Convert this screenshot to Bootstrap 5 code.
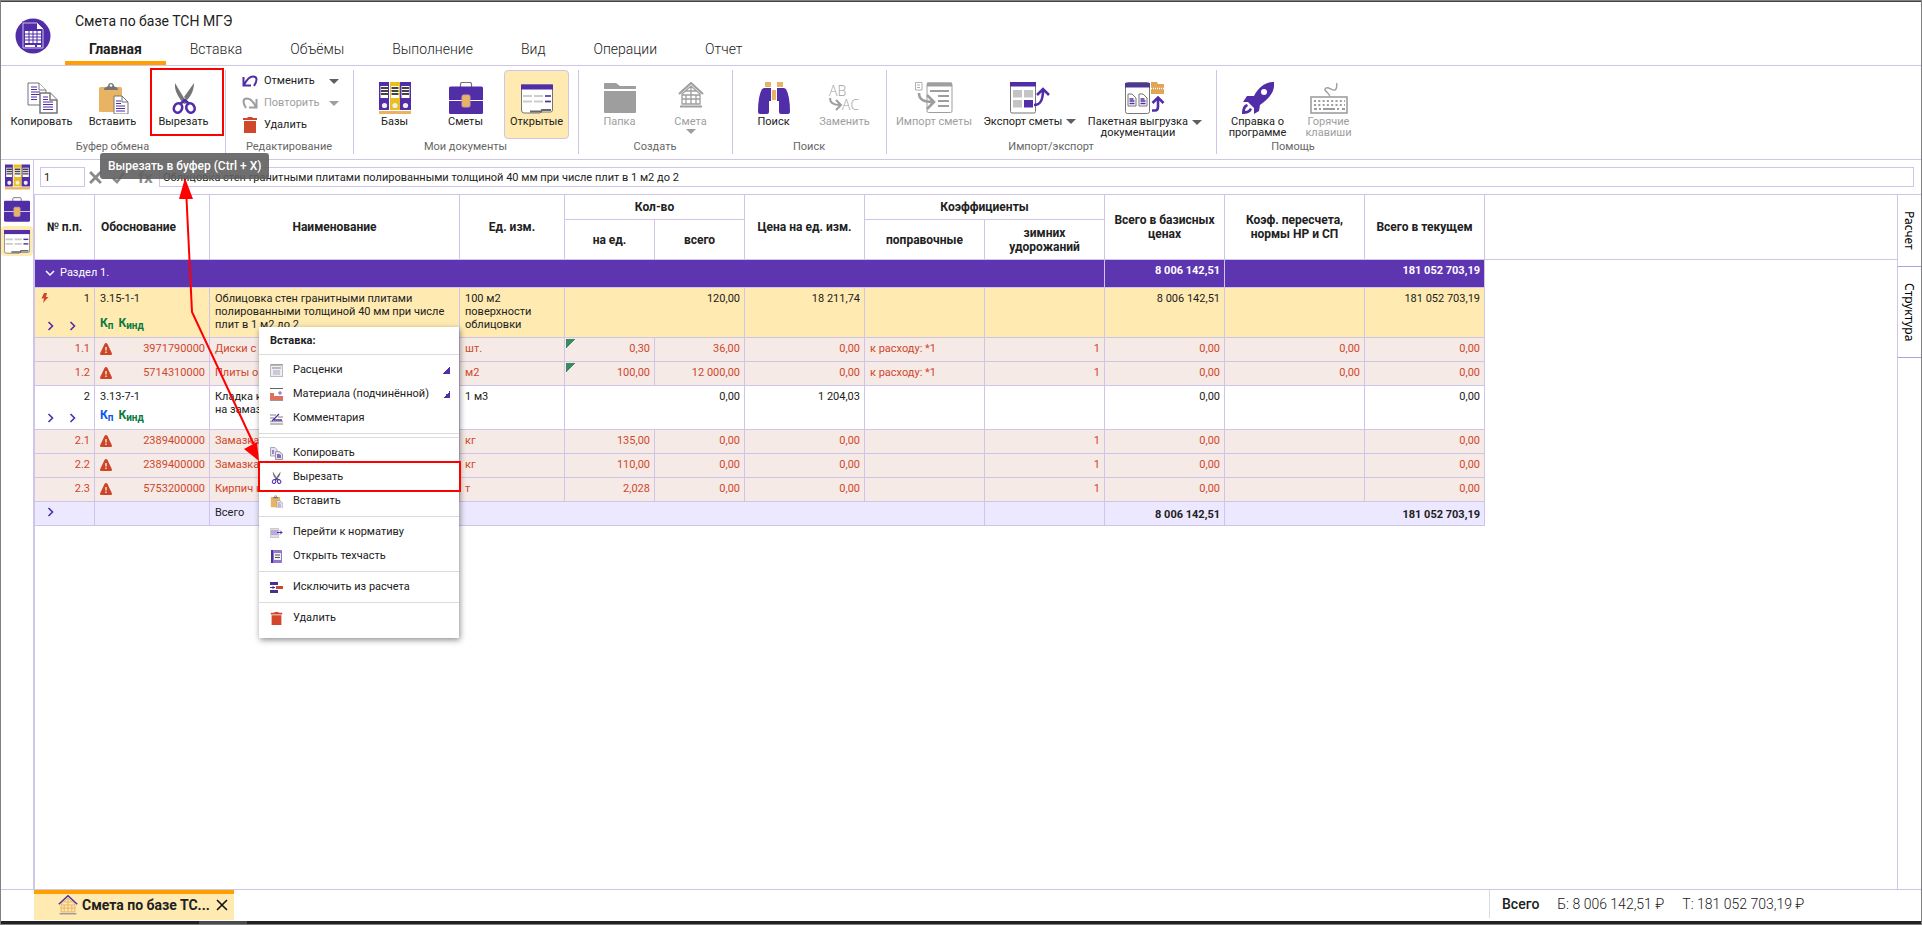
<!DOCTYPE html>
<html lang="ru">
<head>
<meta charset="utf-8">
<meta name="viewport" content="width=device-width, initial-scale=1">
<title>Смета по базе ТСН МГЭ</title>
<link href="https://cdn.jsdelivr.net/npm/bootstrap@5.3.0/dist/css/bootstrap.min.css" rel="stylesheet">
<style>
:root{--line:#cfc5e8;--violet:#512da8;--amber:#ffebb2;--orange:#ffa000;--danger:#d0472c}
body{font-family:Roboto,"Liberation Sans",sans-serif;font-size:12px;line-height:14px;color:#212121;background:#fff}
button{font:inherit;color:inherit;background:none;border:0;padding:0}
svg{display:block;flex:none}
.app{border:1px solid #808080;min-height:100vh;position:relative}
.app-header{border-top:1px solid #444;border-bottom:1px solid var(--line)}
.logo{margin:16px 14px 0 14px}
.doc-title{font-size:14px;line-height:20px;padding:9px 0 0 10px;color:#212121}
.tabs .nav-link{font-size:14px;line-height:20px;font-weight:300;color:#212121;padding:8px 24px 2px;border-bottom:4px solid transparent}
.tabs .nav-link.active{font-weight:700;border-color:var(--orange)}
.ribbon{border-bottom:1px solid var(--line);padding:4px 0 5px;font-size:11px}
.group{border-right:1px solid var(--line);padding:0 9px 0 8px}
.group:last-child{border:0}
.group-title{color:#666;text-align:center;line-height:16px;height:15px}
.tool{min-width:65px;height:69px;border:1px solid transparent;border-radius:4px;padding-top:11px;line-height:11px;display:flex;flex-direction:column;align-items:center;gap:2px;white-space:nowrap}
.tool.on{background:var(--amber);border-color:var(--line)}
.tool:disabled,.row-tool:disabled{color:#9e9e9e}
.caret{width:0;height:0;border:5px solid transparent;border-top-color:#5f5f5f;border-bottom:0;display:block}
:disabled .caret{border-top-color:#9e9e9e}
.row-tool{height:22px;display:flex;align-items:center;gap:6px;width:100%}
.row-tool span:nth-of-type(1){width:59px;text-align:left}
.frame{position:absolute;border:2px solid red;pointer-events:none}
.cut-frame{inset:-2px -8px 3px -1px}
.tip{position:absolute;left:-51px;top:83px;z-index:3;background:rgba(95,95,95,.9);color:#fff;font-size:12px;font-weight:500;line-height:16px;padding:5px 8px;border-radius:3px;white-space:nowrap}
.rail{width:32px;padding-top:2px;gap:2px}
.rail button{width:32px;height:30px;border-radius:4px;display:flex;align-items:center;justify-content:center}
.rail .on{background:var(--amber)}
.main-col{border-left:1px solid var(--line)}
.formula{padding:7px 7px 7px 6px;height:34px;color:#8a8a8a}
.formula input{height:20px;border:1px solid var(--line);padding:0 3px;font-size:11px;color:#212121;border-radius:0}
.cell-no{width:45px}
.fx{font-size:17px;font-weight:700;width:21px}
.work{border-top:1px solid var(--line)}
.sheet-area{border-left:1px solid var(--line);overflow:hidden}
.filler{height:65px;border-bottom:1px solid var(--line)}
.sheet{table-layout:fixed;width:1450px;border-collapse:separate;border-spacing:0;font-size:11px;line-height:13px;flex:none}
.sheet th,.sheet td{border-right:1px solid var(--line);border-bottom:1px solid var(--line)}
.sheet th{font-size:12px;line-height:14px;font-weight:700;text-align:center;vertical-align:middle;padding:0 8px}
.sheet th.start{text-align:left;padding-left:6px}
.sheet td{padding:4px 4px 0 5px;vertical-align:top;overflow:hidden;white-space:nowrap}
.sheet .n{text-align:right}
.h25 th{height:25px}.h40 th{height:40px}
.sheet tr.section td{height:28px;background:#5e35b1;color:#fff}
.sheet tr.section td:first-child{padding-top:6px}
.section .n,.total .n{font-weight:700}
.sel td{height:50px;background:var(--amber)}
.plain td{height:44px}
.res td{height:24px;background-color:#f5eae6;color:var(--danger)}
.total td{height:24px;background:#ece8ff}
.sheet .total .n{padding-top:6px}
.sheet td.wrap{white-space:normal}
.pos{display:flex;justify-content:space-between}
.warn{margin-top:1px}
.sel .inner{height:39px}.plain .inner{height:33px}
.inner{display:flex;flex-direction:column;justify-content:space-between}
.chevs{display:flex;gap:14px;padding-left:7px}
.kf{font-size:12px;font-weight:700;line-height:16px;color:#0c7a40;display:flex;gap:5px}
.kf sub{font-size:10px;bottom:-2px}
.kf .b{color:#0b57f0}
.res .note{background-image:linear-gradient(135deg,#3b8a62 50%,transparent 50%);background-size:10px 10px;background-position:1px 1px;background-repeat:no-repeat}
.menu{position:absolute;left:224px;top:132px;width:200px;z-index:2;background:#fff;box-shadow:1px 2px 6px rgba(0,0,0,.45);padding-bottom:8px;font-size:11px}
.menu h6{font-size:11px;line-height:27px;margin:0;padding-left:11px;font-weight:700;color:#212121}
.menu hr{margin:3px 0;border:0;border-top:1px solid #dcdcdc;opacity:1}
.menu button{display:flex;align-items:center;gap:10px;width:100%;height:24px;padding:0 9px 0 11px;text-align:left}
.menu h6+hr{margin:0 0 3px}
.sub{margin-left:auto;width:7px;height:7px;background:linear-gradient(135deg,transparent 50%,var(--violet) 50%)}
.menu-frame{left:-1px;right:-2px;top:134px;height:31px}
.arrow{position:absolute;left:169px;top:177px;z-index:4;pointer-events:none}
.side{width:24px;border-left:1px solid var(--line)}
.side button{writing-mode:vertical-rl;width:23px;border-bottom:1px solid #b39ddb;font-family:"Noto Sans",sans-serif;font-size:12px;line-height:23px;padding:16px 0;text-align:left;color:#000}
.app-footer{border-top:1px solid var(--line);height:32px}
.doc-tab{width:200px;height:30px;margin-left:33px;background:var(--amber);border-top:4px solid var(--orange);font-size:14px;font-weight:700;padding:0 6px 4px 24px}
.totals{border-left:1px solid #dcdcdc;width:432px;font-size:14px;font-weight:300;height:28px;padding-left:12px;gap:18px}
.totals b{font-weight:500}
.taskbar{height:3px;background:linear-gradient(90deg,#222 198px,#4a4a4a 198px 246px,#222 246px)}
</style>
</head>
<body>
<svg width="0" height="0" class="position-absolute">
<symbol id="i-copy" viewBox="0 0 32 32"><g fill="#fff" stroke="#757575"><path d="M2 1h11l7 7v15H2z"/><path d="M13 1v7h7"/></g><path d="M5 5h6M5 7.500h6M5 10h9M5 12.500h9M5 15h6M5 17.500h6" stroke="#512da8" stroke-width="1"/><g fill="#fff" stroke="#757575" stroke-width="1.500"><path d="M14 11h10l7 7v13H14z"/><path d="M24 11v7h7"/></g><path d="M17 15h5M17 17.500h5M17 20h10M17 22.500h10M17 25h10M17 27.500h10" stroke="#512da8"/></symbol>
<symbol id="i-copy-s" viewBox="0 0 13 13"><path d="M.5.500H5L7 2.500V9H.5z" fill="#e6e0f2" stroke="#aaa"/><path d="M2 3h2v4H2z" fill="#9c86d2"/><path d="M5.500 4.500H9L12.500 7v5.500h-7z" fill="#e6e0f2" stroke="#999"/><path d="M7 7h2l2 1v3H7z" fill="#8468c8"/></symbol>
<symbol id="i-paste" viewBox="0 0 32 32"><rect x="2" y="5" width="23" height="25" rx="1.500" fill="#e9b364"/><path d="M7 8c0-3 3-3 4-4 0-4 6-4 6 0 1 1 4 1 4 4z" fill="#757575"/><circle cx="14" cy="3.500" r="1.300" fill="#fff"/><path d="M17 14h8l6 6v12H17z" fill="#fff" stroke="#757575"/><path d="M25 14v6h6" fill="none" stroke="#757575"/><path d="M19 19h5M19 21.500h5M19 24h9M19 26.500h9M19 29h9" stroke="#512da8"/></symbol>
<symbol id="i-cut" viewBox="0 0 32 32"><path d="M7 1l12 20-3 1C12 17 6 10 7 1zM26 1c0 7-3 13-7 17l-3-3z" fill="#757575"/><g fill="none" stroke="#512da8" stroke-width="2.600"><ellipse cx="10" cy="26" rx="4" ry="4.800" transform="rotate(25 10 26)"/><ellipse cx="22.500" cy="26" rx="4" ry="4.800" transform="rotate(-25 22.500 26)"/><path d="M12 22l5-4 4 4"/></g></symbol>
<symbol id="i-undo" viewBox="0 0 16 14"><path d="M1.500 3v8.500H9M2 11C5 5 8 2.500 11 2.500c5 0 4 5 1 9.500" fill="none" stroke="currentColor" stroke-width="2"/></symbol>
<symbol id="i-trash" viewBox="0 0 14 16"><path d="M1 4h12v12H1zM0 1h4l1-1h4l1 1h4v2H0z" fill="#d0472c"/></symbol>
<symbol id="i-books" viewBox="0 0 32 32"><path fill="#512da8" d="M0 0h10v28H0zM21 0h11v28H21z"/><path fill="#e8bf1f" d="M11 0h10v28H11z"/><path fill="#fff" d="M1.500 4h7.500v12H1.500zM12 4h8v12h-8zM22.500 4h8v12h-8z"/><path stroke="#444" stroke-width="1.800" d="M2 6h7M2 9h7M2 12h7M12.500 6h7M12.500 9h7M12.500 12h7M23 6h7M23 9h7M23 12h7"/><g fill="#eee"><circle cx="5.500" cy="23.500" r="2.600"/><circle cx="16" cy="23.500" r="2.600"/><circle cx="26.500" cy="23.500" r="2.600"/></g><path fill="#e9b364" d="M0 29h32v3H0z"/></symbol>
<symbol id="i-case" viewBox="0 0 34 32"><path d="M11.500 5V2q0-1.500 1.500-1.500h8q1.500 0 1.500 1.500v3" fill="none" stroke="#757575" stroke-width="1.200"/><path d="M0 6q0-1.500 1.500-1.500h31Q34 4.500 34 6v12H0zM0 19h34v11.500q0 1.500-1.500 1.500h-31Q0 32 0 30.500z" fill="#512da8"/><rect x="13" y="13" width="8" height="12" rx="1.500" fill="#e9b364" stroke="#c8a0a0"/></symbol>
<symbol id="i-open" viewBox="0 0 32 32"><path d="M.5 3h31v25q0 2-2 2H20l-1 1H3q-2.500 0-2.500-3z" fill="#fff" stroke="#757575"/><path fill="#512da8" d="M0 2.500h32v5H0z"/><path d="M2 14h27M2 19.500h27" stroke="#ccc" stroke-width="2" stroke-dasharray="9 2"/><path d="M24 14h6M24 19.500h6" stroke="#512da8" stroke-width="1.600"/><path d="M9 29.500h11l1-1.500h9" stroke="#666" stroke-width="2" fill="none"/></symbol>
<symbol id="i-folder" viewBox="0 0 32 32"><path d="M0 7V2q0-1 1-1h11l4 3h15q1 0 1 1v2zM0 9h32v21q0 1-1 1H1q-1 0-1-1z" fill="#9e9e9e"/></symbol>
<symbol id="i-home" viewBox="0 1 32 32"><path d="M4 13L16 2l12 11" fill="none" stroke="var(--roof,#9e9e9e)" stroke-width="2"/><path d="M7 13l9-8 9 8v10H7zM7 14h18M11 14v9M16 14v9M21 14v9M11 10h10M7 18h18M16 5v9" fill="none" stroke="var(--wall,#9e9e9e)" stroke-width="1.300"/><path d="M5 24.500h22v2H5z" fill="#9e9e9e"/></symbol>
<symbol id="i-search" viewBox="0 0 32 32"><path d="M7 0h6v5H7zM19 0h6v5h-6zM14 8h4v10h-4z" fill="#e9b364"/><path d="M6 6h7v13h-2v11q0 2-2 2H2q-2 0-2-2 0-16 4-23zM26 6h-7v13h2v11q0 2 2 2h7q2 0 2-2 0-16-4-23z" fill="#512da8"/></symbol>
<symbol id="i-import" viewBox="0 0 38 32"><g fill="none" stroke="#9e9e9e"><rect x="12" y="1" width="25" height="29.500" rx="1.500"/><path d="M12 2.500h25" stroke-width="4"/><path d="M15 9h19M23 14h11M23 19h11M23 24h11" stroke-width="2"/><path d="M.5 8V.5H7V8zM2 3h3M2 5.500h3" stroke-width=".8"/><path d="M4 11c0 7 5 9 15 9M12 13l7 7-7 7" stroke-width="2.600"/></g></symbol>
<symbol id="i-export" viewBox="0 0 40 32"><rect x=".5" y=".5" width="25" height="30.500" rx="1.500" fill="#fff" stroke="#757575"/><path d="M0 0h26v4.500H0z" fill="#512da8"/><path d="M3 8h9v7.500H3zM14 8h9v7.500h-9zM3 18h9v7.500H3z" fill="#c4c4c4"/><path d="M14 18h9v7.500h-9z" fill="#512da8"/><path d="M24 23c6 0 9-4 9-15M27 13l6-6 6 6" fill="none" stroke="#512da8" stroke-width="2.600"/></symbol>
<symbol id="i-pack" viewBox="0 0 40 32"><rect x=".5" y=".5" width="24" height="31" rx="2" fill="#fff" stroke="#757575"/><path d="M0 1h25v4.500H0z" fill="#4f3696"/><path d="M3 12h4l4 4v8H3zM14 12h4l4 4v8h-8z" fill="#fff" stroke="#757575"/><path d="M4.500 17h4M4.500 19h5M4.500 21.500h5M15.500 17h4M15.500 19h5M15.500 21.500h5" stroke="#512da8" stroke-width="1.400"/><path d="M26 2V0h6l1 2h6v10H26z" fill="#e0a655"/><path d="M26 6.500h13" stroke="#fff" stroke-width="1.600" stroke-dasharray="1 1"/><path d="M27 28.500h3c2 0 3-1 3-4v-8M27.500 21l5.500-5.500 5.500 5.500" fill="none" stroke="#512da8" stroke-width="2.600"/></symbol>
<symbol id="i-rocket" viewBox="0 0 32 32"><path d="M32 0c1 9-4 16-14 23l-1 6-5 3v-6l-6-6H1l4-6h7C16 6 23 0 32 0z" fill="#512da8"/><circle cx="22" cy="10" r="3" fill="#fff"/><path d="M5 22c-4 1-5 5-5 10 5 0 9-1 10-5l-2-1c-1 2-3 3-5 3 0-2 1-4 3-5z" fill="#512da8"/></symbol>
<symbol id="i-keys" viewBox="0 0 38 32"><g fill="none" stroke="#9e9e9e"><rect x="1" y="15" width="36" height="16" stroke-width="1.600"/><path d="M20 15c0-4-6-6-5-8 2-4 7 2 10 1 3-2 1-6 2-7" stroke-width="1.400"/><path d="M4 19h31M4 23h31" stroke-width="2" stroke-dasharray="2 2.300"/><path d="M4 27h3M9 27h2M13 27h12M27 27h2M32 27h3" stroke-width="2"/></g></symbol>
<symbol id="i-chev" viewBox="0 0 8 10"><path d="M1.500 1l4 4-4 4" fill="none" stroke="#512da8" stroke-width="1.600"/></symbol>
<symbol id="i-warn" viewBox="0 0 12 12"><path d="M6 0q1 0 1.500 1L12 10.500q0 1.500-1 1.500H1q-1 0-1-1.500L4.500 1Q5 0 6 0z" fill="#cc4526"/><path d="M6 4v3.500M6 8.500V10" stroke="#f5eae6" stroke-width="1.400"/></symbol>
</svg>
<div class="app d-flex flex-column">
<header class="app-header d-flex">
  <svg class="logo" width="36" height="36" viewBox="0 0 36 36"><circle cx="18" cy="18" r="17.500" fill="#512da8"/><path d="M8 5h14l6 6v19H8z" fill="none" stroke="#cbbfe6"/><path d="M22 5v6h6z" fill="#fff"/><path d="M10 13h16v12H10zM10 27h10v2H10zM22 27h4v2h-4z" fill="#fff"/><path d="M10 16h16M10 19h16M10 22h16M14 13v12M18 13v12M22 13v12" stroke="#512da8"/></svg>
  <div class="flex-grow-1">
    <div class="doc-title">Смета по базе ТСН МГЭ</div>
    <nav class="nav tabs">
      <a class="nav-link active" href="#">Главная</a><a class="nav-link" href="#">Вставка</a><a class="nav-link" href="#">Объёмы</a><a class="nav-link" href="#">Выполнение</a><a class="nav-link" href="#">Вид</a><a class="nav-link" href="#">Операции</a><a class="nav-link" href="#">Отчет</a>
    </nav>
  </div>
</header>
<section class="ribbon d-flex">
  <div class="group"><div class="d-flex" style="gap:6px">
    <button class="tool"><svg width="32" height="32"><use href="#i-copy"/></svg>Копировать</button>
    <button class="tool"><svg width="32" height="32"><use href="#i-paste"/></svg>Вставить</button>
    <div class="position-relative"><button class="tool"><svg width="32" height="32"><use href="#i-cut"/></svg>Вырезать</button><span class="frame cut-frame"></span><span class="tip">Вырезать в буфер (Ctrl + X)</span></div>
  </div><div class="group-title">Буфер обмена</div></div>
  <div class="group" style="width:128px"><div class="ps-1 ms-1" style="height:69px">
    <button class="row-tool"><svg width="16" height="14" color="#512da8"><use href="#i-undo"/></svg><span>Отменить</span><i class="caret"></i></button>
    <button class="row-tool" disabled><svg width="16" height="14" style="transform:scaleX(-1)"><use href="#i-undo"/></svg><span>Повторить</span><i class="caret"></i></button>
    <button class="row-tool"><svg width="16" height="16"><use href="#i-trash"/></svg><span>Удалить</span></button>
  </div><div class="group-title">Редактирование</div></div>
  <div class="group"><div class="d-flex" style="gap:6px">
    <button class="tool"><svg width="32" height="32"><use href="#i-books"/></svg>Базы</button>
    <button class="tool"><svg width="34" height="32"><use href="#i-case"/></svg>Сметы</button>
    <button class="tool on"><svg width="32" height="32"><use href="#i-open"/></svg>Открытые</button>
  </div><div class="group-title">Мои документы</div></div>
  <div class="group"><div class="d-flex" style="gap:6px">
    <button class="tool" disabled><svg width="32" height="32"><use href="#i-folder"/></svg>Папка</button>
    <button class="tool" disabled><svg width="32" height="32"><use href="#i-home"/></svg>Смета<i class="caret"></i></button>
  </div><div class="group-title">Создать</div></div>
  <div class="group"><div class="d-flex" style="gap:6px">
    <button class="tool"><svg width="32" height="32"><use href="#i-search"/></svg>Поиск</button>
    <button class="tool" disabled><svg width="34" height="32" viewBox="0 0 34 32" fill="#9e9e9e" font-family="Open Sans,sans-serif" font-size="14" font-weight="300"><text x="1" y="14">AB</text><text x="14" y="28">AC</text><path d="M2 16c0 5 4 7 10 7M8 18l5 5-5 5" fill="none" stroke="#9e9e9e" stroke-width="2"/></svg>Заменить</button>
  </div><div class="group-title">Поиск</div></div>
  <div class="group" style="width:330px"><div class="d-flex justify-content-between">
    <button class="tool" disabled><svg width="38" height="32"><use href="#i-import"/></svg>Импорт сметы</button>
    <button class="tool"><svg width="40" height="32"><use href="#i-export"/></svg><span class="d-flex align-items-center gap-1">Экспорт сметы<i class="caret"></i></span></button>
    <button class="tool me-1"><svg width="40" height="32"><use href="#i-pack"/></svg><span class="d-flex gap-1"><span>Пакетная выгрузка<br>документации</span><i class="caret mt-1"></i></span></button>
  </div><div class="group-title">Импорт/экспорт</div></div>
  <div class="group"><div class="d-flex" style="gap:6px">
    <button class="tool"><svg width="32" height="32"><use href="#i-rocket"/></svg><span>Справка о<br>программе</span></button>
    <button class="tool" disabled><svg width="38" height="32"><use href="#i-keys"/></svg><span>Горячие<br>клавиши</span></button>
  </div><div class="group-title">Помощь</div></div>
</section>
<main class="d-flex flex-grow-1">
  <aside class="rail d-flex flex-column">
    <button aria-label="Базы"><svg width="25" height="26"><use href="#i-books"/></svg></button>
    <button aria-label="Сметы"><svg width="26" height="25"><use href="#i-case"/></svg></button>
    <button class="on" aria-label="Открытые"><svg width="26" height="26"><use href="#i-open"/></svg></button>
  </aside>
  <div class="main-col flex-grow-1 d-flex flex-column" style="min-width:0">
    <div class="formula d-flex align-items-center">
      <input class="cell-no" value="1" aria-label="Номер строки">
      <svg class="ms-1" width="13" height="13" viewBox="0 0 12 12"><path d="M1 1l10 10M11 1L1 11" stroke="#8a8a8a" stroke-width="2.600"/></svg>
      <svg class="mx-2" width="16" height="13" viewBox="0 0 16 13"><path d="M3 7l4 4 7-9" fill="none" stroke="#8a8a8a" stroke-width="2.600"/></svg>
      <span class="fx ms-1">fx</span>
      <input class="flex-grow-1" value="Облицовка стен гранитными плитами полированными толщиной 40 мм при числе плит в 1 м2 до 2" aria-label="Наименование">
    </div>
    <div class="work d-flex flex-grow-1">
      <div class="sheet-area flex-grow-1 position-relative d-flex align-items-start">
        <table class="sheet">
          <colgroup><col style="width:60px"><col style="width:115px"><col style="width:250px"><col style="width:105px"><col style="width:90px"><col style="width:90px"><col style="width:120px"><col style="width:120px"><col style="width:120px"><col style="width:120px"><col style="width:140px"><col style="width:120px"></colgroup>
          <thead>
            <tr class="h25"><th rowspan="2">№ п.п.</th><th rowspan="2" class="start">Обоснование</th><th rowspan="2">Наименование</th><th rowspan="2">Ед. изм.</th><th colspan="2">Кол-во</th><th rowspan="2">Цена на ед. изм.</th><th colspan="2">Коэффициенты</th><th rowspan="2">Всего в базисных ценах</th><th rowspan="2">Коэф. пересчета, нормы НР и СП</th><th rowspan="2">Всего в текущем</th></tr>
            <tr class="h40"><th>на ед.</th><th>всего</th><th>поправочные</th><th>зимних удорожаний</th></tr>
          </thead>
          <tbody>
            <tr class="section"><td colspan="9"><span class="d-flex align-items-center ps-1"><svg class="me-1" width="12" height="10" viewBox="0 0 12 10"><path d="M2 3l4 4 4-4" fill="none" stroke="#fff" stroke-width="1.500"/></svg>Раздел 1.</span></td><td class="n">8 006 142,51</td><td class="n" colspan="2">181 052 703,19</td></tr>
            <tr class="sel"><td><div class="inner"><div class="pos"><svg width="10" height="12" viewBox="0 0 10 12"><path d="M4 1h3L6 5h2.500L3 11l1-4.500H1.500z" fill="#d0472c"/></svg>1</div><div class="chevs"><svg width="8" height="10"><use href="#i-chev"/></svg><svg width="8" height="10"><use href="#i-chev"/></svg></div></div></td><td><div class="inner">3.15-1-1<div class="kf"><span>К<sub>п</sub></span><span>К<sub>инд</sub></span></div></div></td><td class="wrap">Облицовка стен гранитными плитами полированными толщиной 40 мм при числе плит в 1 м2 до 2</td><td class="wrap">100 м2 поверхности облицовки</td><td colspan="2" class="n">120,00</td><td class="n">18 211,74</td><td></td><td></td><td class="n">8 006 142,51</td><td></td><td class="n">181 052 703,19</td></tr>
            <tr class="res"><td class="n">1.1</td><td><div class="pos"><svg width="12" height="12" class="warn"><use href="#i-warn"/></svg>3971790000</div></td><td>Диски с</td><td>шт.</td><td class="n note">0,30</td><td class="n">36,00</td><td class="n">0,00</td><td>к расходу: *1</td><td class="n">1</td><td class="n">0,00</td><td class="n">0,00</td><td class="n">0,00</td></tr>
            <tr class="res"><td class="n">1.2</td><td><div class="pos"><svg width="12" height="12" class="warn"><use href="#i-warn"/></svg>5714310000</div></td><td>Плиты о</td><td>м2</td><td class="n note">100,00</td><td class="n">12 000,00</td><td class="n">0,00</td><td>к расходу: *1</td><td class="n">1</td><td class="n">0,00</td><td class="n">0,00</td><td class="n">0,00</td></tr>
            <tr class="plain"><td><div class="inner"><div class="n">2</div><div class="chevs"><svg width="8" height="10"><use href="#i-chev"/></svg><svg width="8" height="10"><use href="#i-chev"/></svg></div></div></td><td><div class="inner">3.13-7-1<div class="kf"><span class="b">К<sub>п</sub></span><span>К<sub>инд</sub></span></div></div></td><td>Кладка к<br>на замаз</td><td>1 м3</td><td colspan="2" class="n">0,00</td><td class="n">1 204,03</td><td></td><td></td><td class="n">0,00</td><td></td><td class="n">0,00</td></tr>
            <tr class="res"><td class="n">2.1</td><td><div class="pos"><svg width="12" height="12" class="warn"><use href="#i-warn"/></svg>2389400000</div></td><td>Замазка</td><td>кг</td><td class="n">135,00</td><td class="n">0,00</td><td class="n">0,00</td><td></td><td class="n">1</td><td class="n">0,00</td><td></td><td class="n">0,00</td></tr>
            <tr class="res"><td class="n">2.2</td><td><div class="pos"><svg width="12" height="12" class="warn"><use href="#i-warn"/></svg>2389400000</div></td><td>Замазка</td><td>кг</td><td class="n">110,00</td><td class="n">0,00</td><td class="n">0,00</td><td></td><td class="n">1</td><td class="n">0,00</td><td></td><td class="n">0,00</td></tr>
            <tr class="res"><td class="n">2.3</td><td><div class="pos"><svg width="12" height="12" class="warn"><use href="#i-warn"/></svg>5753200000</div></td><td>Кирпич к</td><td>т</td><td class="n">2,028</td><td class="n">0,00</td><td class="n">0,00</td><td></td><td class="n">1</td><td class="n">0,00</td><td></td><td class="n">0,00</td></tr>
            <tr class="total"><td><div class="chevs"><svg class="warn" width="8" height="10"><use href="#i-chev"/></svg></div></td><td></td><td colspan="6">Всего</td><td></td><td class="n">8 006 142,51</td><td class="n" colspan="2">181 052 703,19</td></tr>
          </tbody>
        </table>
        <div class="filler flex-grow-1"></div>
        <div class="menu">
          <h6>Вставка:</h6><hr>
          <button><svg width="13" height="13" viewBox="0 0 13 13"><rect x=".5" y=".5" width="12" height="12" fill="#eee" stroke="#bbb"/><path d="M1 1h11M2 4h9" stroke="#888"/><path d="M3 6h7v5H3z" fill="#cdc6dd"/></svg>Расценки<i class="sub"></i></button>
          <button><svg width="13" height="13" viewBox="0 0 13 13"><path d="M0 .5h13" stroke="#666"/><path d="M0 5h4v3h9v4H0z" fill="#e0705c"/><path d="M0 12.500h13" stroke="#999"/><path d="M8 5h4M10 3v4" stroke="#7a5bc0"/></svg>Материала (подчинённой)<i class="sub"></i></button>
          <button><svg width="13" height="13" viewBox="0 0 13 13"><path d="M0 3h6M0 6h4M0 9.500h13M0 12h13M8 5h5" stroke="#aaa" stroke-width="1.300"/><path d="M2 9L9 2M4 8h8" stroke="#512da8" stroke-width="1.300"/></svg>Комментария</button>
          <hr><hr>
          <button><svg width="13" height="13"><use href="#i-copy-s"/></svg>Копировать</button>
          <button><svg width="13" height="13"><use href="#i-cut"/></svg>Вырезать</button>
          <button><svg width="13" height="13"><use href="#i-paste"/></svg>Вставить</button>
          <hr>
          <button><svg width="13" height="13" viewBox="0 0 13 13"><rect x=".5" y="2.500" width="8" height="9" fill="#ddd" stroke="#ccc"/><path d="M1 4h7v5H1z" fill="#b9a9df"/><path d="M7 6.500h5M10 4.500l2 2-2 2" fill="none" stroke="#512da8"/></svg>Перейти к нормативу</button>
          <button><svg width="13" height="13" viewBox="0 0 13 13"><rect x="1" width="11" height="13" rx="1" fill="#8f78cc"/><path d="M1 0h2v13H1z" fill="#512da8"/><path d="M4 3h7v7H4z" fill="#eee"/><path d="M5 5h5M5 7.500h5" stroke="#555"/></svg>Открыть техчасть</button>
          <hr>
          <button><svg width="13" height="13" viewBox="0 0 13 13"><path d="M0 1h8v3H0zM0 9h8v3H0z" fill="#45318f"/><path d="M6 5h7v3H6z" fill="#d0472c"/><path d="M0 6.500h5M3 5v3" stroke="#45318f"/></svg>Исключить из расчета</button>
          <hr>
          <button><svg width="13" height="13"><use href="#i-trash"/></svg>Удалить</button>
          <span class="frame menu-frame"></span>
        </div>
      </div>
      <div class="side">
        <button>Расчет</button><button>Структура</button>
      </div>
    </div>
  </div>
</main>
<footer class="app-footer d-flex justify-content-between">
  <div class="doc-tab d-flex align-items-center"><svg class="me-1" width="20" height="20" viewBox="3 0 26 26" style="--roof:#512da8;--wall:#e9b364"><use href="#i-home" width="32" height="32"/></svg>Смета по базе ТС...<button class="ms-auto" aria-label="Закрыть"><svg width="12" height="12" viewBox="0 0 12 12"><path d="M1 1l10 10M11 1L1 11" stroke="#111" stroke-width="1.600"/></svg></button></div>
  <div class="totals d-flex align-items-center"><b>Всего</b><span>Б: 8 006 142,51 ₽</span><span>Т: 181 052 703,19 ₽</span></div>
</footer>
<div class="taskbar"></div>
<svg class="arrow" width="100" height="290"><path d="M16 10l6 124 63 135" fill="none" stroke="red" stroke-width="2"/><path d="M15 0l8 21H9zM89 283L74 271l13-7z" fill="red"/></svg>
</div>
<script src="https://cdn.jsdelivr.net/npm/bootstrap@5.3.0/dist/js/bootstrap.bundle.min.js"></script>
</body>
</html>
